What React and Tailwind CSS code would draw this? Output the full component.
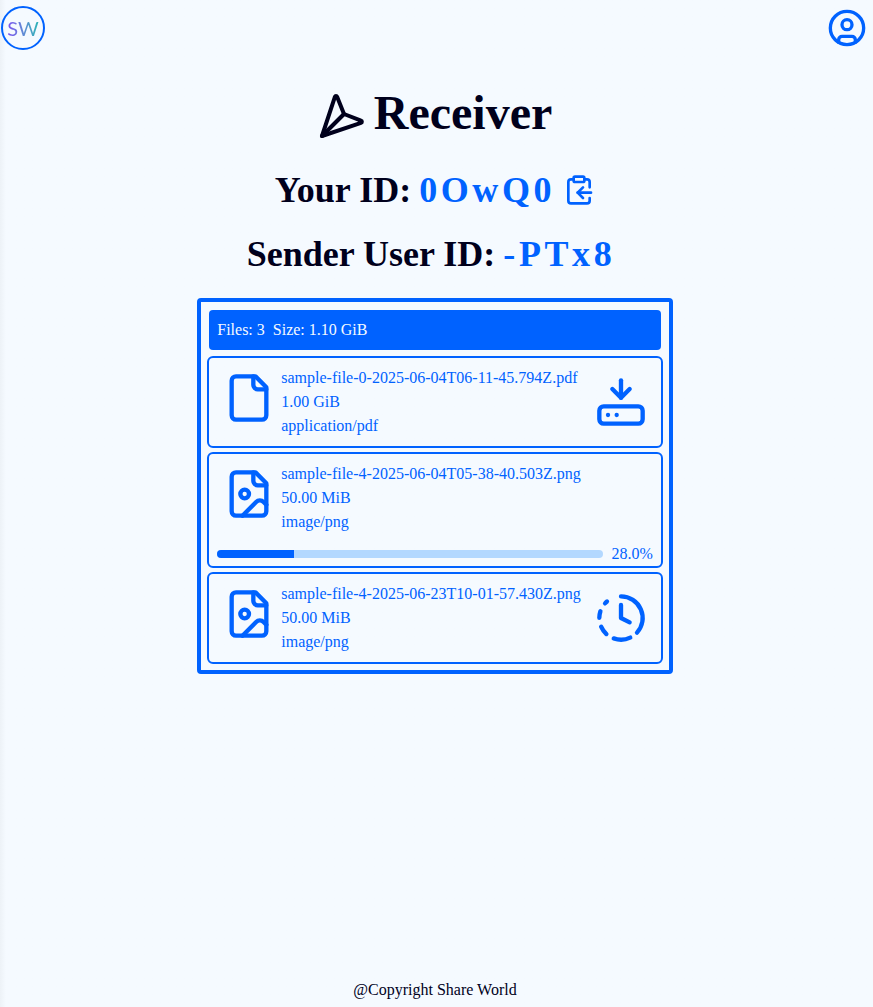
import { CircleUser, ClipboardCopy, ClockFading, HardDriveDownload } from "lucide-react";

const files = [
  {
    name: "sample-file-0-2025-06-04T06-11-45.794Z.pdf",
    size: "1.00 GiB",
    type: "application/pdf",
    status: "ready",
  },
  {
    name: "sample-file-4-2025-06-04T05-38-40.503Z.png",
    size: "50.00 MiB",
    type: "image/png",
    status: "active",
    label: "28.0%",
    filled: 20,
  },
  {
    name: "sample-file-4-2025-06-23T10-01-57.430Z.png",
    size: "50.00 MiB",
    type: "image/png",
    status: "waiting",
  },
];

function DartIcon() {
  return (
    <svg
      className="mt-1.5 size-12"
      viewBox="0 0 48 48"
      fill="none"
      stroke="currentColor"
      strokeWidth="4"
      strokeLinecap="round"
      strokeLinejoin="round"
      aria-hidden="true"
    >
      <path d="M4 44 L16.9 4.8 a1.2 1.2 0 0 1 2.2 0 L26 22 L43 28.6 a1.2 1.2 0 0 1 0 2.3 Z" />
      <path d="M26 22 L4 44" />
    </svg>
  );
}

function FileIcon({ image }) {
  return (
    <svg
      className="size-16 shrink-0 p-1.5"
      viewBox="0 0 24 24"
      fill="none"
      stroke="currentColor"
      strokeWidth="2"
      strokeLinecap="round"
      strokeLinejoin="round"
      aria-hidden="true"
    >
      <path d="M15 2H6a2 2 0 0 0-2 2v16a2 2 0 0 0 2 2h12a2 2 0 0 0 2-2V7Z" />
      <path d="M14 2v4a2 2 0 0 0 2 2h4" />
      {image && (
        <>
          <circle cx="10" cy="12" r="2" />
          <path d="m20 17-1.296-1.296a2.41 2.41 0 0 0-3.408 0L9 22" />
        </>
      )}
    </svg>
  );
}

function FileCard({ file }) {
  return (
    <li className="rounded-md border-2 border-[#0062ff] px-2 pt-2">
      <div className="flex pb-2">
        <FileIcon image={file.type.startsWith("image/")} />
        <div className="min-w-0 pr-2 break-words">
          <p>{file.name}</p>
          <p>{file.size}</p>
          <p>{file.type}</p>
        </div>
        <div className="ml-auto flex w-16 shrink-0 items-center">
          {file.status === "ready" && (
            <button type="button" aria-label="Download" className="cursor-pointer">
              <HardDriveDownload className="size-16 p-1.5" />
            </button>
          )}
          {file.status === "waiting" && (
            <ClockFading className="size-16 p-1.5" aria-hidden="true" />
          )}
        </div>
      </div>
      {file.status === "active" && (
        <div className="flex items-center gap-2">
          <div className="h-2 grow overflow-hidden rounded-full bg-[#b3d8ff]">
            <div className="h-full bg-[#0062ff]" style={{ width: `${file.filled}%` }} />
          </div>
          <span>{file.label}</span>
        </div>
      )}
    </li>
  );
}

export default function App() {
  return (
    <div className="flex min-h-screen flex-col bg-[#f5faff] bg-linear-to-r from-[#edf2f7] to-[#f5faff] to-[6px] font-['Liberation_Serif',serif] text-base text-[#00001c]">
      <header className="flex h-14 items-center justify-between pr-1.5 pl-px text-[#0062ff]">
        <a
          href="#"
          className="flex size-11 items-center justify-center rounded-full border-2 border-[#0062ff]"
        >
          <span className="bg-linear-to-r from-[#7a4cf0] to-[#1fb5b5] bg-clip-text font-['Lato',sans-serif] text-xl leading-6 text-transparent">
            SW
          </span>
        </a>
        <button type="button" aria-label="Account" className="cursor-pointer">
          <CircleUser className="size-10" />
        </button>
      </header>

      <main className="flex grow flex-col items-center gap-6 px-2 pt-6 pr-[11px]">
        <h1 className="flex items-center gap-2 text-5xl leading-[66px] font-bold">
          <DartIcon />
          Receiver
        </h1>
        <h2 className="flex flex-wrap items-center justify-center gap-2 text-4xl font-bold">
          <span>Your ID:</span>
          <span className="tracking-widest text-[#0062ff]">0OwQ0</span>
          <button type="button" aria-label="Copy ID" className="cursor-pointer text-[#0062ff]">
            <ClipboardCopy className="size-8" />
          </button>
        </h2>
        <h2 className="flex flex-wrap justify-center gap-2 pr-2 text-4xl font-bold">
          <span>Sender User ID:</span>
          <span className="tracking-widest text-[#0062ff]">-PTx8</span>
        </h2>

        <section className="flex max-w-full flex-col gap-1 rounded border-4 border-[#0062ff] p-1.5 text-[#0062ff]">
          <div className="m-0.5 flex gap-2 rounded bg-[#0062ff] p-2 text-[#f5faff]">
            <span>Files: 3</span>
            <span>Size: 1.10 GiB</span>
          </div>
          <ul className="flex flex-col gap-1">
            {files.map((file) => (
              <FileCard key={file.name} file={file} />
            ))}
          </ul>
        </section>
      </main>

      <footer className="pr-[3px] pb-[5px] text-center">@Copyright Share World</footer>
    </div>
  );
}
